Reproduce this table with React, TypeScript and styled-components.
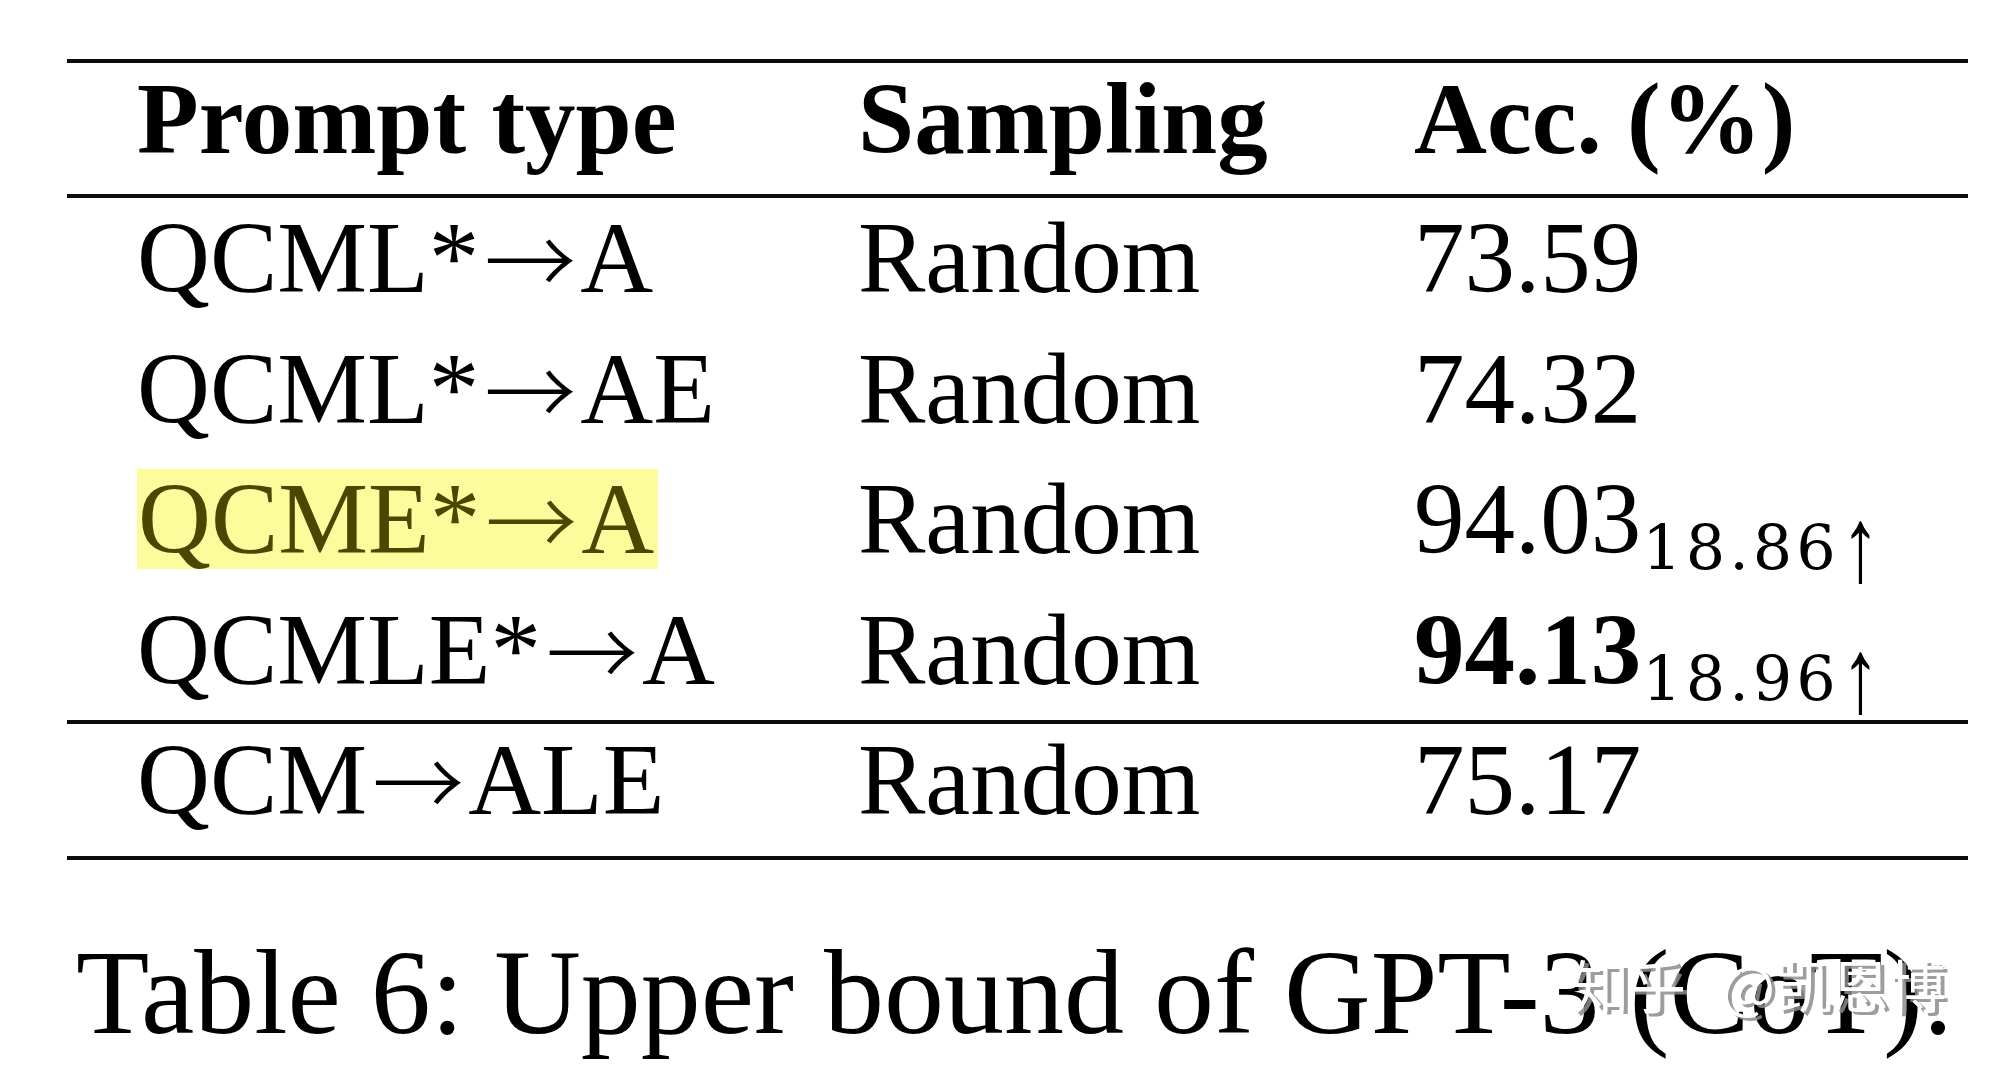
import React from 'react';
import styled, { createGlobalStyle } from 'styled-components';

const GlobalStyle = createGlobalStyle`
  html, body {
    margin: 0;
    padding: 0;
    background: #fff;
  }
  body {
    font-family: "Liberation Serif", "Times New Roman", serif;
    color: #000;
  }
`;

const Page = styled.div`
  width: 2000px;
  height: 1077px;
  box-sizing: border-box;
  padding: 59px 0 0 67px;
  overflow: hidden;
`;

const Table = styled.div`
  width: 1901px;
`;

const Rule = styled.div<{ $top?: number }>`
  height: 4px;
  background: #0d0d0d;
  margin-top: ${props => props.$top ?? 0}px;
`;

const Row = styled.div<{ $lh: number; $bold?: boolean }>`
  display: grid;
  grid-template-columns: 721px 556px 1fr;
  padding-left: 70px;
  height: ${props => props.$lh}px;
  font-size: 101px;
  line-height: ${props => props.$lh}px;
  font-weight: ${props => (props.$bold ? 700 : 400)};
  white-space: nowrap;
`;

const Body = styled.div`
  display: flex;
  flex-direction: column;
  gap: 10.5px;
`;

const Cell = styled.div``;

const Arrow = styled.span`
  font-family: "Noto Sans CJK SC", sans-serif;
  font-weight: 300;
  font-size: 92px;
  line-height: 0;
  vertical-align: -4px;
  margin: 0 4px 0 5px;
`;

const Highlight = styled.span`
  display: inline-block;
  height: 100px;
  line-height: 100px;
  padding: 0 4px 0 1px;
  background: #fdfc9c;
  color: #4c4700;
`;

const Strong = styled.span`
  font-weight: 700;
`;

const Delta = styled.span`
  font-family: "DejaVu Serif", serif;
  font-size: 62px;
  line-height: 0;
  letter-spacing: 4px;
  vertical-align: -16px;
  margin-left: 1px;
`;

const UpArrow = styled.span`
  display: inline-block;
  font-family: "Liberation Sans", sans-serif;
  font-size: 106px;
  line-height: 0;
  letter-spacing: 0;
  vertical-align: -12px;
  margin-left: -6px;
  transform: scaleX(0.72);
`;

const Caption = styled.div`
  position: relative;
  margin: 73px 0 0 9px;
  font-size: 120px;
  line-height: 120px;
  white-space: nowrap;
`;

const Watermark = styled.span`
  position: absolute;
  left: 1496px;
  top: 22px;
  font-family: "Noto Sans CJK SC", sans-serif;
  font-size: 57px;
  line-height: 1;
  word-spacing: 22px;
  color: #fff;
  text-shadow: 4px 3px 0 rgba(140, 140, 140, 0.85);
`;

interface Entry {
  from: string;
  to: string;
  acc: string;
  gain?: string;
  marked?: boolean;
  best?: boolean;
}

const rows: Entry[] = [
  { from: 'QCML*', to: 'A', acc: '73.59' },
  { from: 'QCML*', to: 'AE', acc: '74.32' },
  { from: 'QCME*', to: 'A', acc: '94.03', gain: '18.86', marked: true },
  { from: 'QCMLE*', to: 'A', acc: '94.13', gain: '18.96', best: true },
];

const Prompt = ({ from, to }: { from: string; to: string }) => (
  <>
    {from}
    <Arrow>→</Arrow>
    {to}
  </>
);

const AccCell = ({ acc, gain, best }: Entry) => (
  <Cell>
    {best ? <Strong>{acc}</Strong> : acc}
    {gain && (
      <Delta>
        {gain}
        <UpArrow>↑</UpArrow>
      </Delta>
    )}
  </Cell>
);

const App = () => {
  return (
    <>
      <GlobalStyle />
      <Page>
        <Table>
          <Rule />
          <Row $lh={112} $bold>
            <Cell>Prompt type</Cell>
            <Cell>Sampling</Cell>
            <Cell>Acc. (%)</Cell>
          </Row>
          <Rule $top={19} />
          <Body>
            {rows.map(r => (
              <Row $lh={120} key={r.from + r.to}>
                <Cell>
                  {r.marked ? (
                    <Highlight><Prompt from={r.from} to={r.to} /></Highlight>
                  ) : (
                    <Prompt from={r.from} to={r.to} />
                  )}
                </Cell>
                <Cell>Random</Cell>
                <AccCell {...r} />
              </Row>
            ))}
          </Body>
          <Rule $top={10.5} />
          <Row $lh={112}>
            <Cell><Prompt from="QCM" to="ALE" /></Cell>
            <Cell>Random</Cell>
            <Cell>75.17</Cell>
          </Row>
          <Rule $top={20} />
        </Table>
        <Caption>
          Table 6: Upper bound of GPT-3 (CoT).
          <Watermark>知乎 @凯恩博</Watermark>
        </Caption>
      </Page>
    </>
  );
};

export default App;
